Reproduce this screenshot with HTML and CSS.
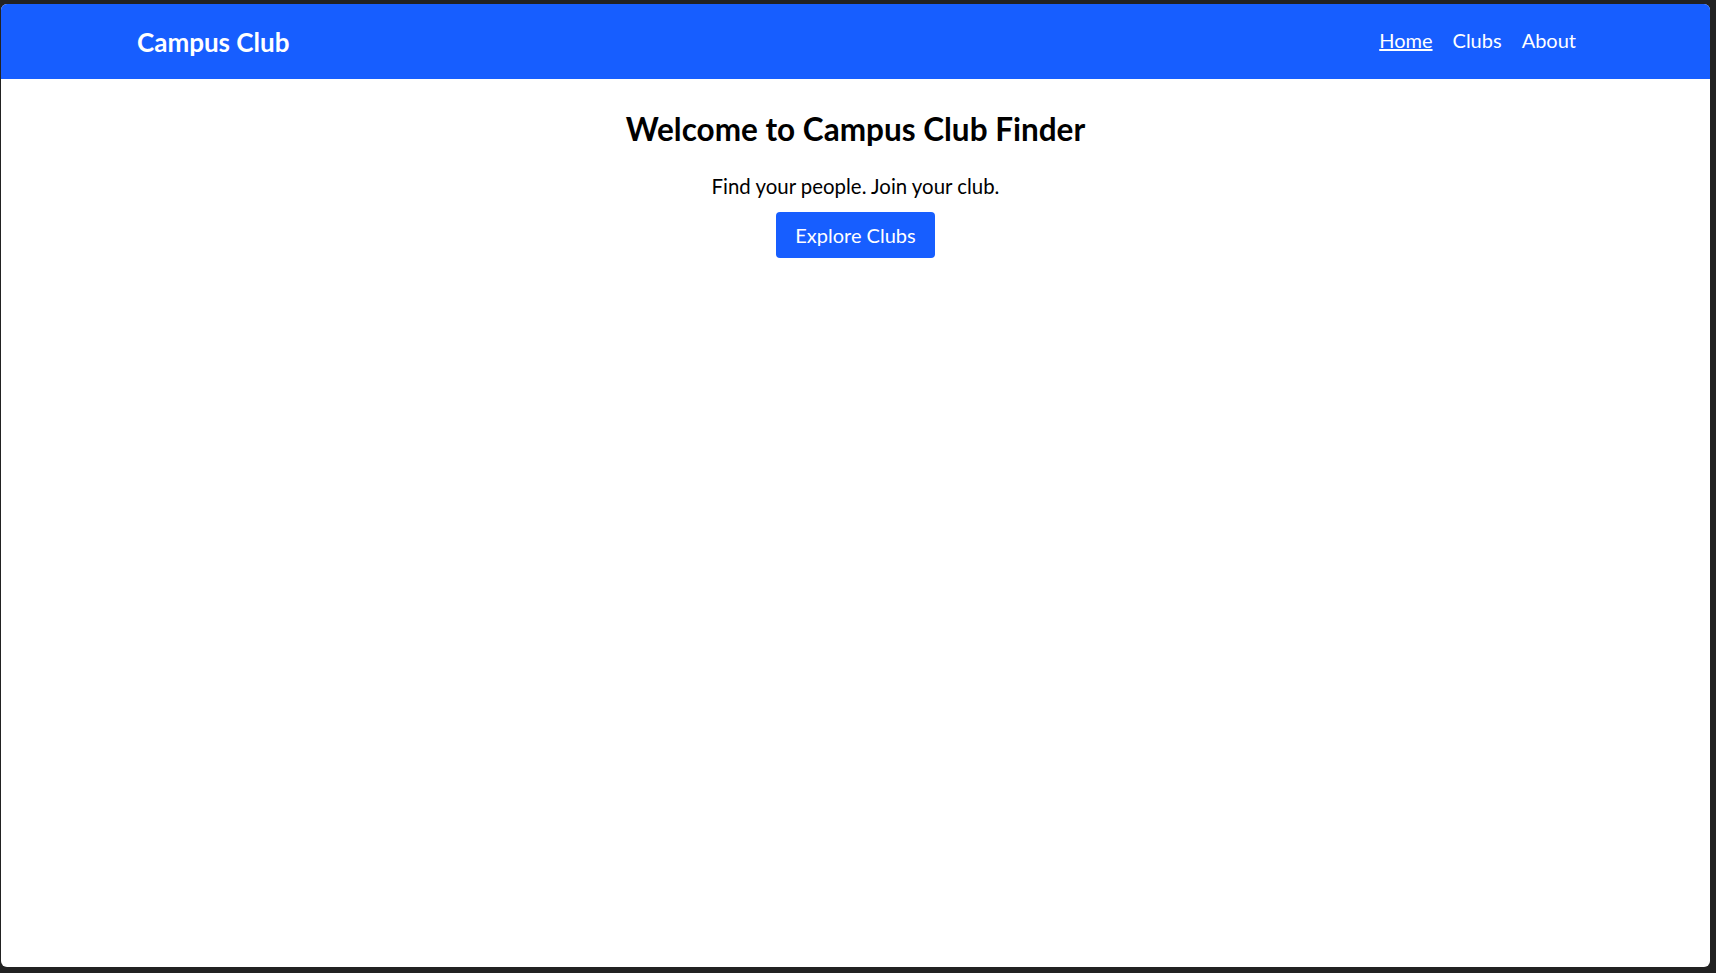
FILE: index.html
```html
<!DOCTYPE html>
<html lang="en">
<head>
<meta charset="utf-8">
<title>Campus Club Finder</title>
<link rel="stylesheet" href="styles.css">
</head>
<body>
<div class="window">
  <header class="topbar">
    <div class="brand">Campus Club</div>
    <nav class="nav">
      <a class="nav-link active" href="#">Home</a>
      <a class="nav-link" href="#">Clubs</a>
      <a class="nav-link" href="#">About</a>
    </nav>
  </header>
  <main class="hero">
    <h1 class="hero-title">Welcome to Campus Club Finder</h1>
    <p class="hero-sub">Find your people. Join your club.</p>
    <a class="btn" href="#">Explore Clubs</a>
  </main>
</div>
</body>
</html>
```
FILE: styles.css
```css
* { box-sizing: border-box; }
html, body { height: 100%; }
body {
  margin: 0;
  background: #222222;
  padding: 4px 6px 6px 1px;
  font-family: Lato, "Noto Sans", sans-serif;
}
.window {
  height: 100%;
  background: #ffffff;
  border-radius: 6px;
  overflow: hidden;
}
.topbar {
  height: 75px;
  background: #175eff;
  display: flex;
  align-items: center;
  justify-content: space-between;
  padding: 0 134px 0 136px;
}
.brand {
  color: #fff;
  font-weight: 700;
  font-size: 26px;
}
.nav {
  display: flex;
  gap: 20px;
  margin-bottom: 4px;
}
.nav-link {
  color: #fff;
  font-size: 20px;
  text-decoration: none;
}
.nav-link.active { text-decoration: underline; }
.hero {
  text-align: center;
  padding-top: 31px;
}
.hero-title {
  margin: 0;
  font-size: 31.5px;
  font-weight: 700;
  color: #000;
}
.hero-sub {
  margin: 26px 0 14px;
  font-size: 20.4px;
  color: #000;
}
.btn {
  display: inline-block;
  background: #175eff;
  color: #fff;
  font-size: 20px;
  text-decoration: none;
  padding: 11px 19.5px;
  border-radius: 4px;
}
```
